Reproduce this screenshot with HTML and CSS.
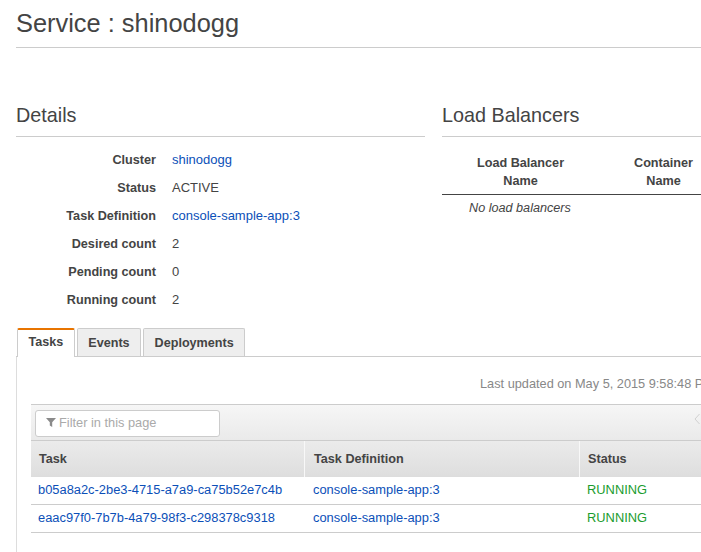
FILE: index.html
```html
<!DOCTYPE html>
<html lang="en">
<head>
<meta charset="utf-8">
<title>Service : shinodogg</title>
<link rel="stylesheet" href="styles.css">
</head>
<body>
<div class="page">
  <h1 class="title">Service : shinodogg</h1>
  <div class="columns">
    <section class="details">
      <h2 class="heading">Details</h2>
      <dl class="facts">
        <dt>Cluster</dt><dd><a href="#">shinodogg</a></dd>
        <dt>Status</dt><dd>ACTIVE</dd>
        <dt>Task Definition</dt><dd><a href="#">console-sample-app:3</a></dd>
        <dt>Desired count</dt><dd>2</dd>
        <dt>Pending count</dt><dd>0</dd>
        <dt>Running count</dt><dd>2</dd>
      </dl>
    </section>
    <section class="balancers">
      <h2 class="heading">Load Balancers</h2>
      <div class="lb-head">
        <div class="lb-col1">Load Balancer<br>Name</div>
        <div class="lb-col2">Container<br>Name</div>
      </div>
      <div class="lb-empty">No load balancers</div>
    </section>
  </div>
  <nav class="tabs">
    <a class="tab tab-active" href="#">Tasks</a>
    <a class="tab" href="#">Events</a>
    <a class="tab" href="#">Deployments</a>
  </nav>
  <div class="panel">
    <div class="updated">Last updated on May 5, 2015 9:58:48 PM</div>
    <div class="toolbar">
      <div class="filter">
        <svg class="filter-icon" width="10" height="10" viewBox="0 0 10 10"><path d="M0 1h10L6.2 5.2V10L3.8 8.6V5.2z" fill="#8a8a8a"/></svg>
        <span>Filter in this page</span>
      </div>
      <svg class="prev" width="6" height="12" viewBox="0 0 6 12"><path d="M5.5 1L1 6l4.5 5" fill="none" stroke="#d0d0d0" stroke-width="1"/></svg>
    </div>
    <div class="grid grid-head">
      <div class="cell">Task</div>
      <div class="cell">Task Definition</div>
      <div class="cell">Status</div>
    </div>
    <div class="grid grid-row">
      <div class="cell"><a href="#">b05a8a2c-2be3-4715-a7a9-ca75b52e7c4b</a></div>
      <div class="cell"><a href="#">console-sample-app:3</a></div>
      <div class="cell running">RUNNING</div>
    </div>
    <div class="grid grid-row">
      <div class="cell"><a href="#">eaac97f0-7b7b-4a79-98f3-c298378c9318</a></div>
      <div class="cell"><a href="#">console-sample-app:3</a></div>
      <div class="cell running">RUNNING</div>
    </div>
  </div>
</div>
</body>
</html>
```
FILE: styles.css
```css
html, body {
  margin: 0;
  padding: 0;
  height: 552px;
  overflow: hidden;
  background: #fff;
}
body {
  font-family: "Liberation Sans", Arial, sans-serif;
  font-size: 12.65px;
  color: #444;
}
a {
  color: #0b4fb8;
  text-decoration: none;
}
.page {
  width: 900px;
  padding-left: 16px;
}
.title {
  margin: 0;
  height: 47px;
  border-bottom: 1px solid #ccc;
  font-size: 25.4px;
  font-weight: 400;
  line-height: 46px;
  color: #444;
}
.columns {
  display: flex;
  gap: 17px;
  margin-top: 48px;
}
.details {
  flex: none;
  width: 409px;
}
.balancers {
  flex: none;
  width: 458px;
}
.heading {
  margin: 0;
  height: 40px;
  border-bottom: 1px solid #ccc;
  font-size: 19.8px;
  font-weight: 400;
  line-height: 38px;
  color: #444;
}
.facts {
  display: grid;
  grid-template-columns: 140px 1fr;
  column-gap: 16px;
  grid-auto-rows: 28px;
  margin: 9px 0 0;
  line-height: 28px;
}
.facts dt {
  text-align: right;
  font-weight: 700;
}
.facts dd {
  margin: 0;
  font-size: 13px;
}
.lb-head {
  display: flex;
  box-sizing: border-box;
  height: 58px;
  padding-top: 17px;
  border-bottom: 1px solid #444;
  font-weight: 700;
  line-height: 18px;
  text-align: center;
}
.lb-col1 {
  width: 157px;
}
.lb-col2 {
  width: 129px;
}
.lb-empty {
  padding-left: 27px;
  font-style: italic;
  line-height: 26px;
}
.tabs {
  display: flex;
  gap: 2px;
  margin-top: 14px;
  padding-left: 1px;
  height: 28px;
  border-bottom: 1px solid #ccc;
  font-size: 12.6px;
}
.tab {
  box-sizing: border-box;
  height: 28px;
  padding: 0 10.5px;
  border: 1px solid #ccc;
  border-bottom: 0;
  border-radius: 2px 2px 0 0;
  background: #eee;
  color: #444;
  font-weight: 700;
  line-height: 28px;
}
.tab-active {
  height: 29px;
  margin-bottom: -1px;
  border-top: 2px solid #e87400;
  background: #fff;
  line-height: 24px;
}
.panel {
  height: 200px;
  padding-left: 14px;
  border-left: 1px solid #ddd;
}
.updated {
  box-sizing: border-box;
  height: 47px;
  padding: 18px 0 0 449px;
  color: #888;
  font-size: 12.75px;
  line-height: 18px;
  white-space: nowrap;
}
.toolbar {
  position: relative;
  display: flex;
  align-items: center;
  box-sizing: border-box;
  height: 36px;
  padding: 1px 0 0 4px;
  border-top: 1px solid #ccc;
  background: linear-gradient(#f6f6f6, #eaeaea);
}
.filter {
  display: flex;
  align-items: center;
  gap: 3px;
  box-sizing: border-box;
  width: 185px;
  height: 27px;
  padding: 0 0 2px 10px;
  border: 1px solid #ccc;
  border-radius: 3px;
  background: #fff;
  color: #aaa;
  font-size: 12.8px;
}
.prev {
  position: absolute;
  left: 663px;
  top: 8px;
}
.grid {
  display: grid;
  grid-template-columns: 274px 275px 1fr;
  box-sizing: border-box;
}
.grid-head {
  height: 37px;
  border-top: 1px solid #ccc;
  border-bottom: 1px solid #ddd;
  background: linear-gradient(#ebebeb, #dedede);
  font-weight: 700;
  line-height: 36px;
}
.grid-head .cell {
  padding-left: 8px;
  border-right: 1px solid #f8f8f8;
}
.grid-head .cell + .cell {
  padding-left: 9px;
}
.grid-head .cell:last-child {
  padding-left: 8px;
  border-right: 0;
}
.grid-row {
  height: 28px;
  border-bottom: 1px solid #ccc;
  font-size: 12.88px;
  line-height: 26px;
}
.grid-row .cell {
  padding-left: 7px;
}
.grid-row .cell + .cell {
  padding-left: 8px;
}
.grid-row .cell + .cell.running {
  padding-left: 7px;
  color: #1a9c2e;
}
```
